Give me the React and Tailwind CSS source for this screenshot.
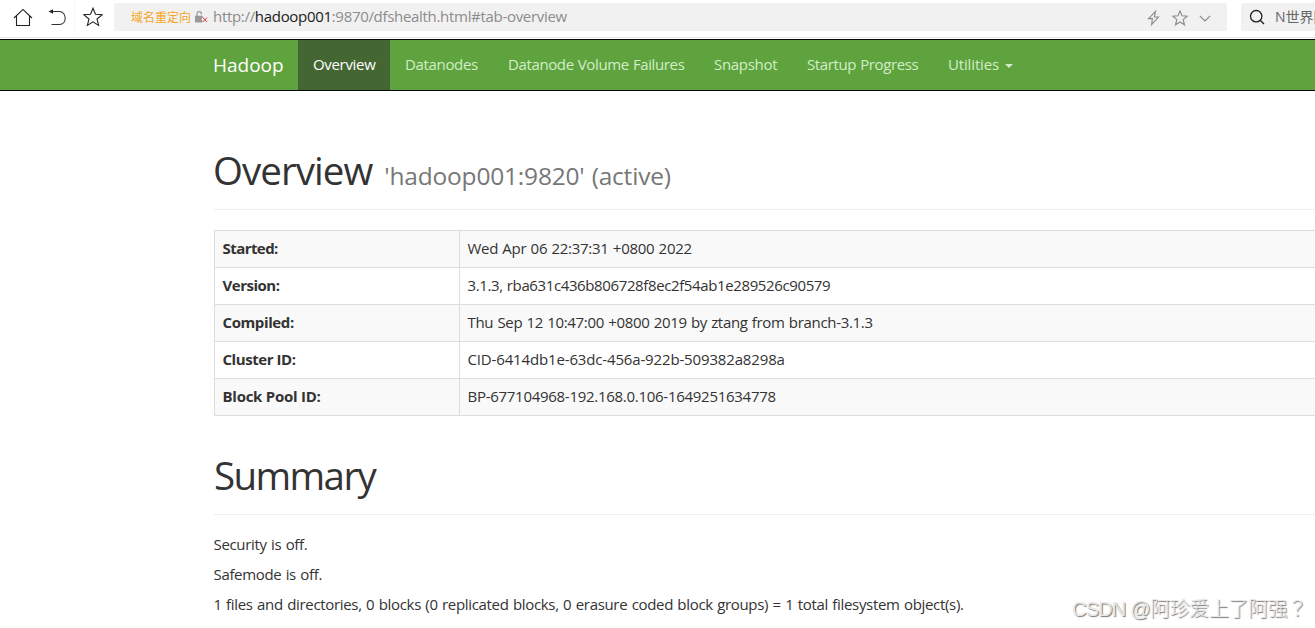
const NAV = [
  { label: 'Overview', cls: 'w-[92px] bg-[#446633] text-white tracking-[-0.32px]' },
  { label: 'Datanodes', cls: 'w-[103px] text-[#d2edc8] tracking-[-0.34px]' },
  { label: 'Datanode Volume Failures', cls: 'w-[206px] text-[#d2edc8] tracking-[-0.38px] [word-spacing:0.6px]' },
  { label: 'Snapshot', cls: 'w-[93px] text-[#d2edc8] tracking-[-0.3px]' },
  { label: 'Startup Progress', cls: 'w-[142px] text-[#d2edc8] tracking-[-0.38px] [word-spacing:0.6px]' },
];

const ROWS = [
  { name: 'Started:', nameCls: 'tracking-[-0.56px]', value: 'Wed Apr 06 22:37:31 +0800 2022', valueCls: 'tracking-[-0.27px]' },
  { name: 'Version:', nameCls: 'tracking-[-0.48px]', value: '3.1.3, rba631c436b806728f8ec2f54ab1e289526c90579', valueCls: 'tracking-[-0.38px]' },
  { name: 'Compiled:', nameCls: 'tracking-[-0.4px]', value: 'Thu Sep 12 10:47:00 +0800 2019 by ztang from branch-3.1.3', valueCls: 'tracking-[-0.315px]' },
  { name: 'Cluster ID:', nameCls: 'tracking-[-0.44px]', value: 'CID-6414db1e-63dc-456a-922b-509382a8298a', valueCls: 'tracking-[-0.15px]' },
  { name: 'Block Pool ID:', nameCls: 'tracking-[-0.26px]', value: 'BP-677104968-192.168.0.106-1649251634778', valueCls: 'tracking-[-0.28px]' },
];

const STAR = 'M10 1.2 L12.5 7.3 L19 7.8 L14 12 L15.6 18.4 L10 14.9 L4.4 18.4 L6 12 L1 7.8 L7.5 7.3 Z';

function BrowserBar() {
  return (
    <header className="flex h-[39px] shrink-0 items-start border-b border-white bg-white">
      <div className="flex h-[38px] w-full items-start border-b border-[#e6e6e6]">
        <div className="flex h-[34px] w-[75px] shrink-0 items-center border-r border-[#f8f8f8] pl-[13px]">
          <svg className="h-5 w-5" viewBox="0 0 20 20" fill="none" stroke="#222" strokeWidth="1.1">
            <path d="M1 11 L10 2.4 L19 11 M3.5 9 V18.5 H16.5 V9" />
          </svg>
          <svg className="ml-[14px] h-5 w-5" viewBox="0 0 20 20" fill="none" stroke="#333" strokeWidth="1.1">
            <path d="M4 4.5 H12.5 C16 4.5 18.2 7.6 18.2 11 C18.2 14.6 16 17.5 12.5 17.5 H4.5" />
            <path d="M1.5 4.5 L6 2.2 V6.8 Z" fill="#222" stroke="none" />
          </svg>
        </div>
        <svg className="ml-[7.5px] mt-[7px] h-5 w-5 shrink-0" viewBox="0 0 20 20" fill="none" stroke="#222" strokeWidth="1.1">
          <path d={STAR} />
        </svg>
        <div className="ml-[11.5px] mt-[3px] flex h-7 w-[1113px] shrink-0 items-center rounded-[2px] bg-[#f1f1f1] pl-[17px]">
          <span className="w-[63px] whitespace-nowrap pt-px text-[12px] text-[#f5a623]">域名重定向</span>
          <svg className="h-3.5 w-[14px]" viewBox="0 0 14 14">
            <path d="M3 6 V3.8 a2.2 2.2 0 0 1 4.4 0 V4.6" fill="none" stroke="#999" strokeWidth="1.2" />
            <path d="M1 5.8 H8.6 V7.6 L7.6 9 L8.2 10.4 V12.6 H1 Z" fill="#999" />
            <path d="M8.8 7.4 L13 12 M13 7.4 L8.8 12" stroke="#e02f2f" strokeWidth="1" />
          </svg>
          <span className="ml-[5px] whitespace-nowrap pb-0.5 text-[15px] leading-5 tracking-[-0.31px] text-[#8c8c8c]">
            http://<span className="text-[#1a1a1a]">hadoop001</span>:9870/dfshealth.html#tab-overview
          </span>
          <div className="ml-auto mr-4 flex items-center gap-[11px] pt-px">
            <svg className="h-4 w-4" viewBox="0 0 16 16" fill="none" stroke="#888" strokeWidth="1.1">
              <path d="M10.5 1.4 L3.6 8.6 H7.4 L6.6 14.6 L13.4 7 H9.4 Z" />
            </svg>
            <svg className="h-4 w-4" viewBox="0 0 20 20" fill="none" stroke="#888" strokeWidth="1.4">
              <path d={STAR} />
            </svg>
            <svg className="h-3 w-3" viewBox="0 0 12 12" fill="none" stroke="#888" strokeWidth="1.1">
              <path d="M0.8 3.8 L6 9 L11.2 3.8" />
            </svg>
          </div>
        </div>
        <div className="ml-3.5 mt-[3px] flex h-7 flex-1 items-center overflow-hidden rounded-l-[2px] bg-[#f1f1f1] pl-2">
          <svg className="h-4 w-4 shrink-0" viewBox="0 0 16 16" fill="none" stroke="#222" strokeWidth="1.3">
            <circle cx="7.2" cy="7.2" r="5.7" />
            <path d="M11.2 11.2 L15 15" />
          </svg>
          <span className="ml-2.5 whitespace-nowrap text-[14px] text-[#666]">N世界阳</span>
        </div>
      </div>
    </header>
  );
}

function Navbar() {
  return (
    <nav className="flex h-[52px] shrink-0 border-y border-[#080808] bg-[#5fa33e] pl-[213px] leading-5">
      <div className="w-[85px] pt-[15px] text-[19px] text-white">Hadoop</div>
      {NAV.map((n) => (
        <div key={n.label} className={`whitespace-nowrap pl-[15px] pt-[14px] text-[15px] ${n.cls}`}>
          {n.label}
        </div>
      ))}
      <div className="flex pl-[14px] pt-[14px] text-[15px] tracking-[-0.15px] text-[#d2edc8]">
        Utilities
        <span className="ml-[6px] mt-[10px] h-0 w-0 border-x-4 border-t-4 border-x-transparent border-t-[#d2edc8]" />
      </div>
    </nav>
  );
}

export default function App() {
  return (
    <div className="relative flex h-[628px] w-full flex-col overflow-hidden bg-white font-['Open_Sans','Noto_Sans_CJK_SC',sans-serif] text-[15px] leading-5 text-[#333]">
      <BrowserBar />
      <Navbar />
      <main className="pl-[214px]">
        <h1 className="mt-[59px] h-[60px] whitespace-nowrap border-b border-[#eee] text-[38.5px] leading-10 tracking-[-0.95px]">
          <div className="-ml-px flex items-baseline">
            Overview
            <small className="ml-[12px] text-[24.5px] tracking-[-0.2px] text-[#777] [word-spacing:1px]">'hadoop001:9820' (active)</small>
          </div>
        </h1>
        <div className="mt-5 border-l border-t border-[#ddd]">
          {ROWS.map((r) => (
            <div key={r.name} className="flex h-[37px] border-b border-[#ddd] odd:bg-[#f9f9f9]">
              <div className={`w-[245px] shrink-0 border-r border-[#ddd] pl-[7.5px] pt-[7px] font-bold ${r.nameCls}`}>{r.name}</div>
              <div className={`whitespace-nowrap pl-[7.5px] pt-[7px] [word-spacing:0.6px] ${r.valueCls}`}>{r.value}</div>
            </div>
          ))}
        </div>
        <h1 className="mt-[39px] h-[60px] border-b border-[#eee] text-[38.5px] leading-10 tracking-[-1.6px]">Summary</h1>
        <div className="-ml-[0.5px] mt-[19px] flex flex-col gap-2.5 whitespace-nowrap [word-spacing:0.8px]">
          <p className="tracking-[-0.33px]">Security is off.</p>
          <p className="tracking-[-0.34px]">Safemode is off.</p>
          <p className="tracking-[-0.325px]">
            1 files and directories, 0 blocks (0 replicated blocks, 0 erasure coded block groups) = 1 total filesystem object(s).
          </p>
        </div>
      </main>
      <div className="absolute left-[1072px] top-[595px] whitespace-nowrap font-['Liberation_Sans','Noto_Sans_CJK_SC',sans-serif] text-[20px] font-light leading-[26px] tracking-[-0.8px] text-[#e8e8e8] [text-shadow:1px_1px_1px_#777]">
        CSDN <span className="tracking-[-0.4px]">@阿珍爱上了阿强<span className="font-['Noto_Sans_CJK_TC',sans-serif]" lang="zh-TW">？</span></span>
      </div>
    </div>
  );
}
